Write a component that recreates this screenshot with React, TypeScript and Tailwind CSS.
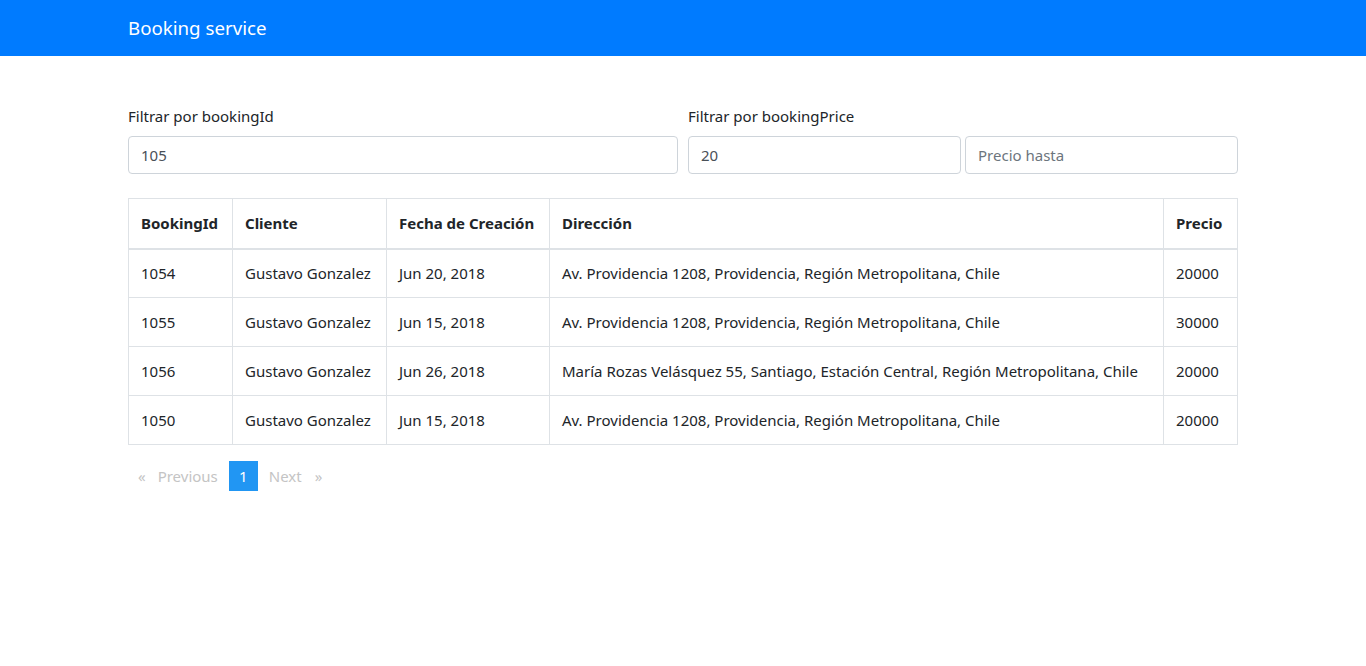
import React from "react";

const rows = [
  { id: "1054", cliente: "Gustavo Gonzalez", fecha: "Jun 20, 2018", dir: "Av. Providencia 1208, Providencia, Región Metropolitana, Chile", precio: "20000" },
  { id: "1055", cliente: "Gustavo Gonzalez", fecha: "Jun 15, 2018", dir: "Av. Providencia 1208, Providencia, Región Metropolitana, Chile", precio: "30000" },
  { id: "1056", cliente: "Gustavo Gonzalez", fecha: "Jun 26, 2018", dir: "María Rozas Velásquez 55, Santiago, Estación Central, Región Metropolitana, Chile", precio: "20000" },
  { id: "1050", cliente: "Gustavo Gonzalez", fecha: "Jun 15, 2018", dir: "Av. Providencia 1208, Providencia, Región Metropolitana, Chile", precio: "20000" },
];

export default function App() {
  return (
    <div className="min-h-[666px] bg-white text-[#212529] text-[15px] leading-[24px]" style={{ fontFamily: '"Noto Sans", "Open Sans", sans-serif' }}>
      <nav className="h-[56px] bg-[#007bff] flex items-center">
        <div className="w-[1110px] mx-auto">
          <span className="text-white text-[18.7px] leading-[30px]">Booking service</span>
        </div>
      </nav>
      <main className="w-[1110px] mx-auto pt-[48px]">
        <div className="grid grid-cols-2 gap-[10px]">
          <div>
            <label className="block mb-[8px]">Filtrar por bookingId</label>
            <input
              readOnly
              value="105"
              className="w-full h-[38px] px-[12px] border border-[#ced4da] rounded-[4px] text-[#495057] outline-none"
            />
          </div>
          <div>
            <label className="block mb-[8px]">Filtrar por bookingPrice</label>
            <div className="flex gap-[4px]">
              <input
                readOnly
                value="20"
                className="flex-1 min-w-0 h-[38px] px-[12px] border border-[#ced4da] rounded-[4px] text-[#495057] outline-none"
              />
              <input
                readOnly
                placeholder="Precio hasta"
                className="flex-1 min-w-0 h-[38px] px-[12px] border border-[#ced4da] rounded-[4px] text-[#495057] placeholder:text-[#6c757d] outline-none"
              />
            </div>
          </div>
        </div>
        <table className="mt-[24px] w-full border-collapse table-fixed">
          <colgroup>
            <col className="w-[104px]" />
            <col className="w-[154px]" />
            <col className="w-[163px]" />
            <col />
            <col className="w-[74px]" />
          </colgroup>
          <thead>
            <tr>
              {["BookingId", "Cliente", "Fecha de Creación", "Dirección", "Precio"].map((h) => (
                <th key={h} className="text-left font-bold border border-[#dee2e6] border-b-2 px-[12px] h-[50px] whitespace-nowrap">
                  {h}
                </th>
              ))}
            </tr>
          </thead>
          <tbody>
            {rows.map((r) => (
              <tr key={r.id}>
                <td className="border border-[#dee2e6] px-[12px] h-[49px] whitespace-nowrap">{r.id}</td>
                <td className="border border-[#dee2e6] px-[12px] whitespace-nowrap">{r.cliente}</td>
                <td className="border border-[#dee2e6] px-[12px] whitespace-nowrap">{r.fecha}</td>
                <td className="border border-[#dee2e6] px-[12px] whitespace-nowrap">{r.dir}</td>
                <td className="border border-[#dee2e6] px-[12px] whitespace-nowrap">{r.precio}</td>
              </tr>
            ))}
          </tbody>
        </table>
        <ul className="mt-[16px] flex items-center h-[30px] text-[#c4c4c4]">
          <li className="ml-[10px]">«</li>
          <li className="ml-[12px]">Previous</li>
          <li className="ml-[11px] w-[29px] h-[30px] bg-[#2196f3] text-white flex items-center justify-center">1</li>
          <li className="ml-[11px]">Next</li>
          <li className="ml-[13px]">»</li>
        </ul>
      </main>
    </div>
  );
}
